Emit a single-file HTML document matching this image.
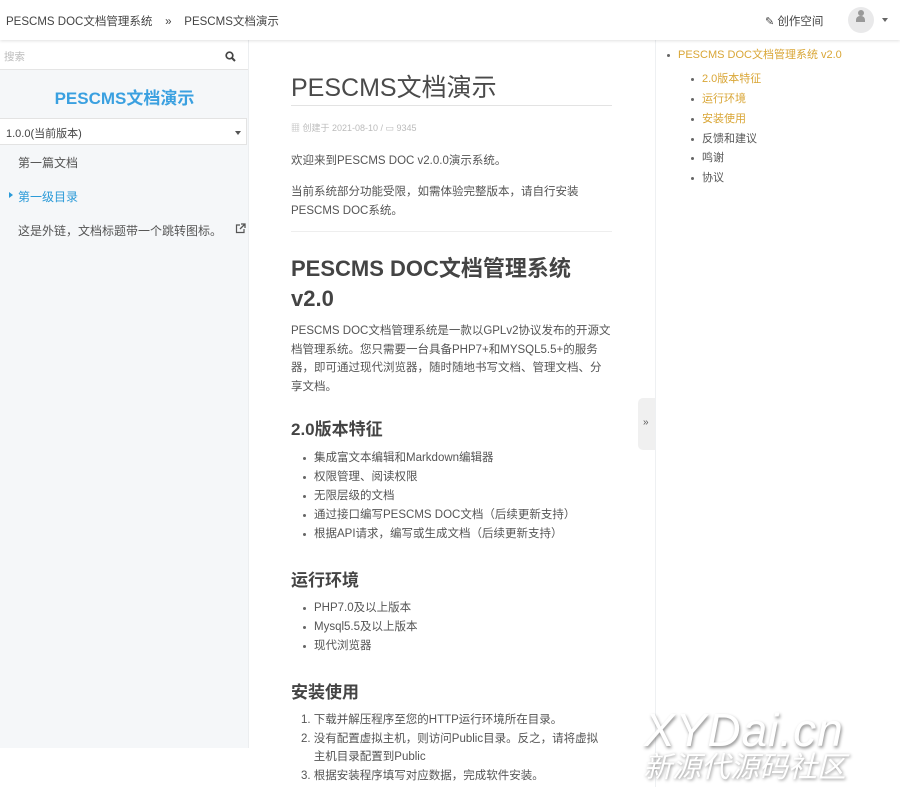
<!DOCTYPE html>
<html><head><meta charset="utf-8"><style>
*{margin:0;padding:0;box-sizing:border-box}
body{width:900px;height:787px;overflow:hidden;background:#fff;font-family:"Liberation Sans","Noto Sans CJK SC",sans-serif;color:#555;font-size:11.5px;position:relative}
.a{position:absolute;white-space:nowrap}
.top{position:absolute;left:0;top:0;width:900px;height:40px;background:#fff;box-shadow:0 1px 3px rgba(0,0,0,.12);z-index:2}
.side{position:absolute;left:0;top:40px;width:249px;height:708px;background:#f5f7f9;border-right:1px solid #eceef0}
.rp{position:absolute;left:655px;top:40px;width:1px;height:747px;background:#eef0f2}
.li{position:absolute;white-space:nowrap;line-height:19px}
.li:before{content:"";position:absolute;left:-11px;top:8px;width:3px;height:3px;border-radius:50%;background:#666}
.h{font-weight:bold;color:#444}
.gold{color:#d9a636}
</style></head><body>
<div class="top">
 <div class="a" style="left:6px;top:13px;font-size:11.5px;color:#444">PESCMS DOC文档管理系统 &nbsp;&nbsp; <b style="font-weight:normal">»</b> &nbsp;&nbsp; PESCMS文档演示</div>
 <div class="a" style="left:765px;top:13px;font-size:11.5px;color:#444"><span style="font-size:11px">&#9998;</span> 创作空间</div>
 <div class="a" style="left:848px;top:7px;width:26px;height:26px;border-radius:50%;background:#e9e9ea"></div>
 <div class="a" style="left:856px;top:16px;width:9px;height:6px;border-radius:4px 4px 0 0;background:#999"></div>
 <div class="a" style="left:857.5px;top:10px;width:6px;height:6px;border-radius:50%;background:#999"></div>
 <div class="a" style="left:882px;top:18px;border:3.5px solid transparent;border-top:4px solid #666;border-bottom:0"></div>
</div>
<div class="side">
 <div class="a" style="left:0;top:0;width:248px;height:30px;background:#fff;border-bottom:1px solid #e5e5e5"></div>
 <div class="a" style="left:4px;top:9px;font-size:10.5px;color:#bbb">搜索</div>
 <svg class="a" style="left:225px;top:11px" width="11" height="11" viewBox="0 0 11 11"><circle cx="4.5" cy="4.5" r="3.3" fill="none" stroke="#444" stroke-width="1.7"/><path d="M7 7l3 3" stroke="#444" stroke-width="2"/></svg>
 <div class="a" style="left:0;top:44px;width:249px;text-align:center;font-size:17px;font-weight:bold;color:#3aa0e0">PESCMS文档演示</div>
 <div class="a" style="left:0;top:78px;width:247px;height:27px;background:#fff;border:1px solid #e3e3e3;border-left:0"></div>
 <div class="a" style="left:6px;top:85px;font-size:11px;color:#444">1.0.0(当前版本)</div>
 <div class="a" style="left:235px;top:91px;border:3.5px solid transparent;border-top:4px solid #555;border-bottom:0"></div>
 <div class="a" style="left:18px;top:114px;font-size:12px;color:#555">第一篇文档</div>
 <div class="a" style="left:9px;top:152px;border:3.5px solid transparent;border-left:4px solid #2a9ad8;border-right:0"></div>
 <div class="a" style="left:18px;top:148px;font-size:12px;color:#2a9ad8">第一级目录</div>
 <div class="a" style="left:18px;top:182px;font-size:12px;color:#555">这是外链，文档标题带一个跳转图标。</div>
 <svg class="a" style="left:235px;top:183px" width="11" height="11" viewBox="0 0 11 11"><path d="M5 2H1.5v7.5H9V6" fill="none" stroke="#555" stroke-width="1.2"/><path d="M6 1h4v4M10 1L5 6" fill="none" stroke="#555" stroke-width="1.3"/></svg>
</div>
<div class="rp"></div>
<div class="a" style="left:638px;top:398px;width:17px;height:52px;background:#f0f0f0;border-radius:5px 0 0 5px"></div>
<div class="a" style="left:643px;top:417px;font-size:10px;color:#555">»</div>

<div class="a" style="left:291px;top:68px;font-size:25px;color:#4a4a4a">PESCMS文档演示</div>
<div class="a" style="left:291px;top:105px;width:321px;height:1px;background:#e3e3e3"></div>
<div class="a" style="left:291px;top:121px;font-size:9px;color:#bbb">▦ 创建于 2021-08-10 / ▭ 9345</div>
<div class="a" style="left:291px;top:152px">欢迎来到PESCMS DOC v2.0.0演示系统。</div>
<div class="a" style="left:291px;top:183px;line-height:19px">当前系统部分功能受限，如需体验完整版本，请自行安装<br>PESCMS DOC系统。</div>
<div class="a" style="left:291px;top:231px;width:321px;height:1px;background:#eee"></div>
<div class="a h" style="left:291px;top:254px;font-size:22px;line-height:30px">PESCMS DOC文档管理系统<br>v2.0</div>
<div class="a" style="left:291px;top:322px;line-height:18.7px">PESCMS DOC文档管理系统是一款以GPLv2协议发布的开源文<br>档管理系统。您只需要一台具备PHP7+和MYSQL5.5+的服务<br>器，即可通过现代浏览器，随时随地书写文档、管理文档、分<br>享文档。</div>
<div class="a h" style="left:291px;top:415px;font-size:17px">2.0版本特征</div>
<div class="li" style="left:314px;top:449px">集成富文本编辑和Markdown编辑器</div>
<div class="li" style="left:314px;top:468px">权限管理、阅读权限</div>
<div class="li" style="left:314px;top:487px">无限层级的文档</div>
<div class="li" style="left:314px;top:506px">通过接口编写PESCMS DOC文档（后续更新支持）</div>
<div class="li" style="left:314px;top:525px">根据API请求，编写或生成文档（后续更新支持）</div>
<div class="a h" style="left:291px;top:566px;font-size:17px">运行环境</div>
<div class="li" style="left:314px;top:599px">PHP7.0及以上版本</div>
<div class="li" style="left:314px;top:618px">Mysql5.5及以上版本</div>
<div class="li" style="left:314px;top:637px">现代浏览器</div>
<div class="a h" style="left:291px;top:678px;font-size:17px">安装使用</div>
<div class="a" style="left:301px;top:711px;line-height:18.5px">1. 下载并解压程序至您的HTTP运行环境所在目录。<br>2. 没有配置虚拟主机，则访问Public目录。反之，请将虚拟<br>&nbsp;&nbsp;&nbsp;&nbsp;主机目录配置到Public<br>3. 根据安装程序填写对应数据，完成软件安装。</div>

<div class="li gold" style="left:678px;top:46px;font-size:11px">PESCMS DOC文档管理系统 v2.0</div>
<div class="li gold" style="left:702px;top:70px;font-size:11px">2.0版本特征</div>
<div class="li gold" style="left:702px;top:90px;font-size:11px">运行环境</div>
<div class="li gold" style="left:702px;top:110px;font-size:11px">安装使用</div>
<div class="li" style="left:702px;top:130px;font-size:11px">反馈和建议</div>
<div class="li" style="left:702px;top:149px;font-size:11px">鸣谢</div>
<div class="li" style="left:702px;top:169px;font-size:11px">协议</div>

<div class="a" style="left:644px;top:703px;font-size:46px;font-style:italic;color:#fff;text-shadow:1px 2px 3px rgba(0,0,0,.45);letter-spacing:1px">XYDai.cn</div>
<div class="a" style="left:643px;top:753px;font-size:29px;line-height:30px;font-style:italic;color:#fff;text-shadow:1px 1px 3px rgba(0,0,0,.45)">新源代源码社区</div>
</body></html>
